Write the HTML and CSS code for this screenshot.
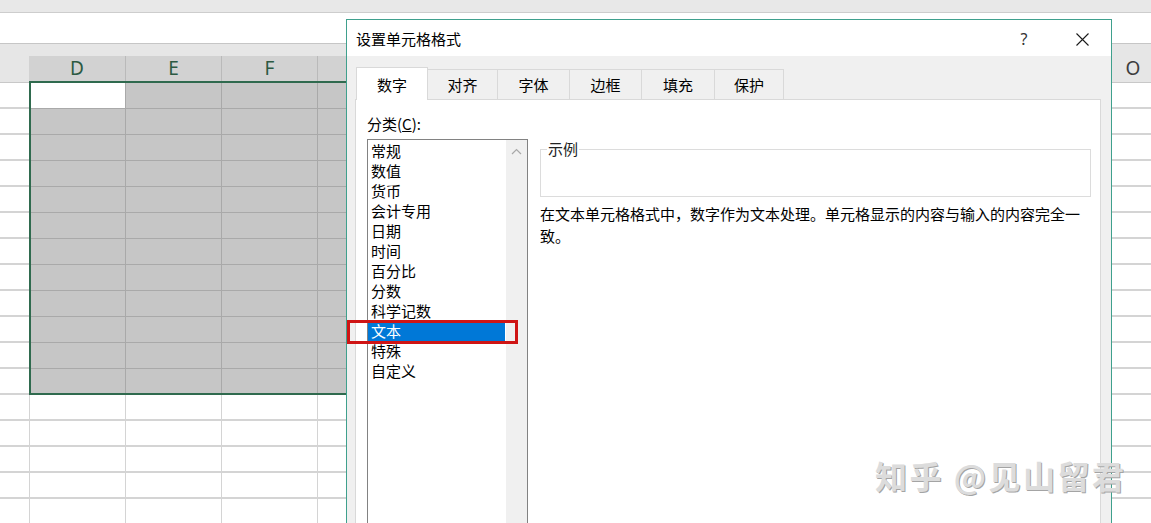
FILE: index.html
```html
<!DOCTYPE html>
<html lang="zh-CN">
<head>
<meta charset="utf-8">
<title>设置单元格格式</title>
<link rel="stylesheet" href="styles.css">
</head>
<body>
<div class="topband"></div>
<div class="formula"></div>
<div class="headband"></div>
<div class="colheads">
  <div class="ch corner"></div>
  <div class="ch sel">D</div>
  <div class="ch sel">E</div>
  <div class="ch sel">F</div>
  <div class="ch sel"></div>
  <div class="ch"></div>
  <div class="ch"></div>
  <div class="ch"></div>
  <div class="ch"></div>
  <div class="ch"></div>
  <div class="ch"></div>
  <div class="ch"></div>
  <div class="ch">O</div>
</div>
<div class="grid">
  <div class="selection"><div class="active-cell"></div></div>
</div>

<div class="dialog">
  <div class="titlebar">
    <span class="title">设置单元格格式</span>
    <span class="tbtn help">?</span>
    <span class="tbtn close"><svg width="13" height="13" viewBox="0 0 13 13"><path d="M0.5 0.5 L12.5 12.5 M12.5 0.5 L0.5 12.5" stroke="#1a1a1a" stroke-width="1.1" fill="none"/></svg></span>
  </div>
  <div class="dbody">
    <div class="tabs">
      <div class="tab active"><span>数字</span></div>
      <div class="tab"><span>对齐</span></div>
      <div class="tab"><span>字体</span></div>
      <div class="tab"><span>边框</span></div>
      <div class="tab"><span>填充</span></div>
      <div class="tab"><span>保护</span></div>
    </div>
    <div class="panel">
      <div class="leftcol">
        <div class="label">分类(<u>C</u>):</div>
        <div class="listbox">
          <ul class="items">
            <li>常规</li>
            <li>数值</li>
            <li>货币</li>
            <li>会计专用</li>
            <li>日期</li>
            <li>时间</li>
            <li>百分比</li>
            <li>分数</li>
            <li>科学记数</li>
            <li class="selected">文本</li>
            <li>特殊</li>
            <li>自定义</li>
          </ul>
          <div class="scrollbar"><svg class="chev" width="11" height="7" viewBox="0 0 11 7"><path d="M1 6 L5.5 1.5 L10 6" stroke="#a8a8a8" stroke-width="1.2" fill="none"/></svg></div>
        </div>
      </div>
      <div class="rightcol">
        <fieldset class="sample"><legend>示例</legend><div class="sample-body"></div></fieldset>
        <p class="desc">在文本单元格格式中，数字作为文本处理。单元格显示的内容与输入的内容完全一致。</p>
      </div>
    </div>
  </div>
</div>

<div class="redbox"></div>
<div class="watermark">知乎 @见山留君</div>
</body>
</html>
```
FILE: styles.css
```css
* { box-sizing: border-box; }
html, body {
  margin: 0;
  padding: 0;
  width: 1151px;
  height: 523px;
  overflow: hidden;
  background: #fff;
}
body {
  position: relative;
  font-family: "Noto Sans CJK SC", "Noto Sans", sans-serif;
  color: #000;
}

/* spreadsheet */
.topband { height: 13px; background: #e8e8e8; border-bottom: 1px solid #cdcdcd; }
.formula { height: 31px; background: #fff; border-bottom: 1px solid #c6c6c6; }
.headband { height: 12px; background: #e6e6e6; }
.colheads {
  display: flex;
  height: 27px;
  background: #e6e6e6;
  border-bottom: 1px solid #c8c8c8;
}
.ch {
  flex: 0 0 96px;
  display: flex;
  align-items: center;
  justify-content: center;
  font-family: "Noto Sans", "Open Sans", sans-serif;
  font-size: 19px;
  color: #3d3d3d;
  padding-bottom: 2px;
}
.ch.corner { flex-basis: 29px; }
.ch.sel { background: #d2d2d2; color: #2c5a42; }
.ch.sel + .ch { border-left: 1px solid #bababa; }

.grid {
  position: relative;
  height: 440px;
  background-color: #fff;
  background-image:
    linear-gradient(to bottom, transparent 0 24px, #d4d4d4 24px),
    linear-gradient(to right, #d4d4d4 0 1px, transparent 1px);
  background-size: 100% 26px, 96px 100%;
  background-position: 0 0, 29px 0;
}
.selection {
  position: absolute;
  left: 29px;
  top: -2px;
  width: 340px;
  height: 314px;
  border: 2px solid #2f6a4e;
  background-color: #c6c6c6;
  background-image:
    linear-gradient(to bottom, transparent 0 25px, #a9a9a9 25px),
    linear-gradient(to right, #a9a9a9 0 1px, transparent 1px);
  background-size: 100% 26px, 96px 100%;
  background-position: 0 0, 94px 0;
}
.active-cell { width: 94px; height: 25px; background: #fff; }

/* dialog */
.dialog {
  position: absolute;
  left: 346px;
  top: 19px;
  width: 766px;
  height: 530px;
  border: 1px solid #3fa08d;
  background: #f0f0f0;
  display: flex;
  flex-direction: column;
  z-index: 5;
}
.titlebar {
  height: 36px;
  background: #fff;
  display: flex;
  align-items: center;
  flex: 0 0 36px;
}
.title {
  flex: 1;
  padding-left: 9px;
  font-size: 15px;
  line-height: 20px;
  padding-top: 1px;
}
.tbtn {
  width: 46px;
  display: flex;
  justify-content: center;
  align-items: center;
  height: 36px;
  padding-top: 3px;
}
.help {
  font-family: "Noto Sans", sans-serif;
  font-size: 16px;
  line-height: 20px;
  color: #333;
  margin-right: 12px;
  padding-top: 1px;
}
.close { margin-right: 6px; }

.dbody {
  flex: 1;
  padding: 11px 10px 0 8px;
  display: flex;
  flex-direction: column;
}
.tabs {
  display: flex;
  align-items: flex-end;
  height: 32px;
  margin-left: 1px;
  position: relative;
  z-index: 1;
}
.tab {
  height: 30px;
  border-top: 1px solid #d9d9d9;
  border-right: 1px solid #d9d9d9;
  display: flex;
  align-items: center;
  justify-content: center;
  padding-top: 1px;
  overflow: hidden;
}
.tab span {
  font-size: 15px;
  line-height: 18px;
}
.tab.active {
  height: 33px;
  margin-bottom: -1px;
  background: #fff;
  border-left: 1px solid #d9d9d9;
  padding-top: 1px;
}
.tab:nth-child(1) { width: 72px; }
.tab:nth-child(2) { width: 70px; }
.tab:nth-child(3) { width: 72px; }
.tab:nth-child(4) { width: 72px; }
.tab:nth-child(5) { width: 73px; }
.tab:nth-child(6) { width: 69px; }

.panel {
  flex: 1;
  background: #fff;
  border: 1px solid #d9d9d9;
  display: flex;
  padding: 15px 0 0 11px;
}
.leftcol { width: 161px; display: flex; flex-direction: column; }
.label { height: 20px; font-size: 15px; line-height: 20px; margin-top: -1px; }
.listbox {
  margin-top: 5px;
  height: 400px;
  border: 1px solid #828282;
  display: flex;
}
.items {
  list-style: none;
  margin: 0;
  padding: 1px 0 0 0;
  flex: 1;
}
.items li {
  height: 20px;
  font-size: 15px;
  line-height: 19px;
  padding-left: 3px;
  margin-right: 1px;
}
.items li.selected { background: #0078d7; color: #fff; }
.scrollbar {
  width: 21px;
  background: #f0f0f0;
  display: flex;
  justify-content: center;
  align-items: flex-start;
}
.chev { margin-top: 8px; }

.rightcol { margin-left: 12px; width: 551px; }
.sample {
  margin: 27px 0 0 0;
  padding: 0;
  border: 1px solid #dcdcdc;
  min-width: 0;
}
.sample legend {
  margin-left: 6px;
  padding: 0 1px;
  font-size: 15px;
  line-height: 14px;
  color: #222;
}
.sample-body { height: 40px; }
.desc {
  margin: 6px 0 0 0;
  width: 549px;
  font-size: 15px;
  line-height: 22px;
}

/* overlays */
.redbox {
  position: absolute;
  left: 347px;
  top: 320px;
  width: 171px;
  height: 24px;
  border: 3px solid #cf1515;
  z-index: 6;
}
.watermark {
  position: absolute;
  left: 875px;
  top: 455px;
  font-size: 32px;
  line-height: 40px;
  font-weight: 700;
  letter-spacing: 2.5px;
  color: #dcdcdc;
  text-shadow: 1px 1px 0 #a4a4a4;
  white-space: nowrap;
  z-index: 7;
}
```
